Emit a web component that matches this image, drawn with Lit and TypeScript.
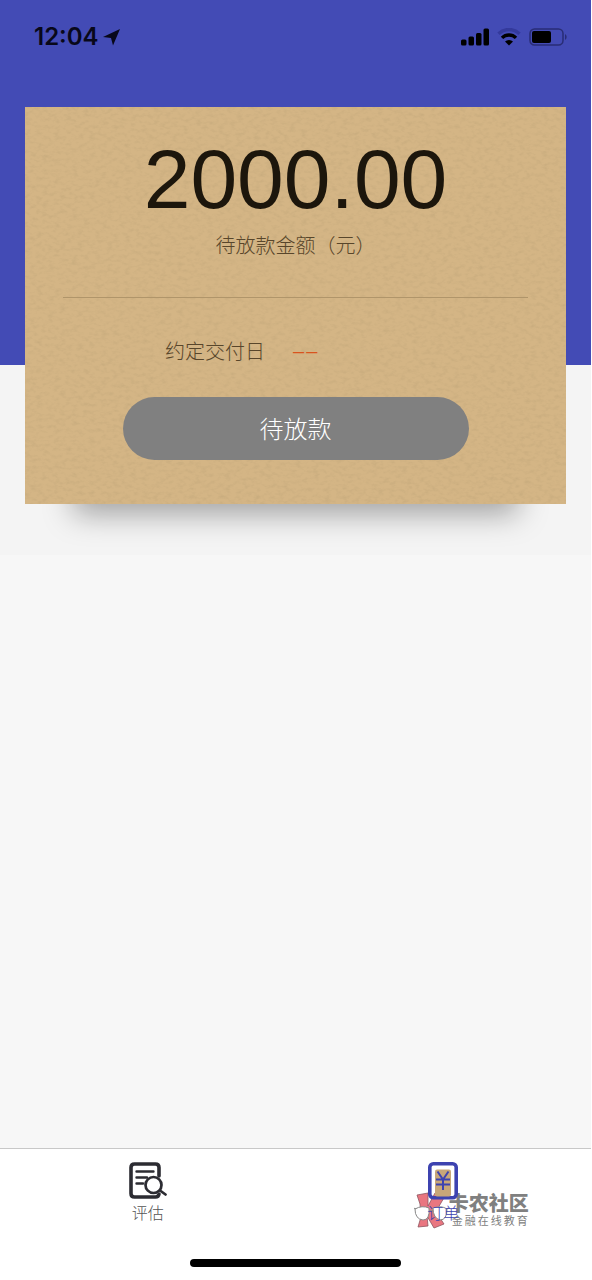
import { LitElement, html, css } from "lit";
import { customElement, property } from "lit/decorators.js";

@customElement("status-bar")
class StatusBar extends LitElement {
  static styles = css`
    :host {
      display: flex;
      justify-content: space-between;
      align-items: center;
      height: 74px;
      padding: 0 23px 0 34px;
      color: #08081a;
    }
    .side {
      display: flex;
      align-items: center;
    }
    .time {
      font: 600 24px/32px Inter, "Liberation Sans", sans-serif;
    }
    .arrow {
      margin-left: 4px;
    }
    .wifi {
      margin: 0 8px;
    }
    svg {
      display: block;
    }
  `;
  render() {
    return html`
      <div class="side">
        <span class="time">12:04</span>
        <svg class="arrow" width="18" height="18" viewBox="0 0 18 18">
          <path d="M17 1 0 9 8 10 10 17.500Z" fill="currentColor" />
        </svg>
      </div>
      <div class="side">
        <svg width="28" height="18" viewBox="0 0 28 18" fill="#000">
          <rect x="0" y="11.500" width="5.500" height="6" rx="1.500" />
          <rect x="7.500" y="8.500" width="5.500" height="9" rx="1.500" />
          <rect x="15" y="5" width="5.500" height="12.500" rx="1.500" />
          <rect x="22.500" y="0.500" width="5.500" height="17" rx="1.500" />
        </svg>
        <svg class="wifi" width="24" height="18" viewBox="0 0 24 18" fill="none">
          <path d="M1.500 5.800a15 15 0 0 1 21 0" stroke="#343a9c" stroke-width="3.400" />
          <path d="M5 9.900a10 10 0 0 1 14 0" stroke="#000" stroke-width="3.400" />
          <path d="M8 13.600a5.800 5.800 0 0 1 8 0L12 17.500Z" fill="#000" />
        </svg>
        <svg width="39" height="18" viewBox="0 0 39 18">
          <rect x="1" y="1" width="33" height="16" rx="4.500" fill="none" stroke="#292d75" stroke-width="1.500" />
          <rect x="3" y="3" width="19" height="12" rx="2" fill="#000" />
          <path d="M36 6v6a3.500 3.500 0 0 0 0-6Z" fill="#292d75" />
        </svg>
      </div>
    `;
  }
}

@customElement("loan-card")
class LoanCard extends LitElement {
  @property() amount = "";
  @property() date = "––";

  static styles = css`
    :host {
      display: block;
      position: relative;
    }
    .shadow {
      position: absolute;
      left: 48px;
      right: 48px;
      bottom: 0;
      height: 80px;
      box-shadow: 0 10px 30px rgba(0, 0, 0, 0.34);
    }
    .card {
      position: relative;
      display: flex;
      flex-direction: column;
      align-items: center;
      padding: 32px 38px 44px;
      background: #d4b585;
      overflow: hidden;
    }
    .paper {
      position: absolute;
      inset: 0;
      width: 100%;
      height: 100%;
    }
    .amount,
    .label,
    .term,
    .action {
      position: relative;
    }
    .amount {
      font: 400 84px/80px "Liberation Sans", sans-serif;
      color: #1c160c;
    }
    .label {
      margin-top: 10px;
      font-size: 20px;
      line-height: 32px;
      color: #58462b;
    }
    .term {
      box-sizing: border-box;
      width: 100%;
      display: flex;
      gap: 28px;
      margin-top: 36px;
      padding: 37px 0 0 102px;
      border-top: 1px solid #b0956a;
      font-size: 20px;
      line-height: 32px;
      color: #58462b;
    }
    .date {
      display: flex;
      gap: 2px;
      font-family: "Liberation Sans", sans-serif;
      color: #d9541e;
    }
    .action {
      width: 346px;
      max-width: 100%;
      height: 63px;
      margin-top: 30px;
      padding: 0 0 2px;
      border: 0;
      border-radius: 32px;
      background: #808080;
      color: #fff;
      font: 300 24px/32px "Noto Sans CJK SC", sans-serif;
    }
  `;
  render() {
    return html`
      <div class="shadow"></div>
      <section class="card">
        <svg class="paper" aria-hidden="true">
          <filter id="grain" x="0" y="0" width="100%" height="100%">
            <feTurbulence type="fractalNoise" baseFrequency="0.17 0.27" numOctaves="3" seed="7" />
            <feColorMatrix values="0 0 0 0 0.5  0 0 0 0 0.36  0 0 0 0 0.18  0.900 0 0 0 -0.390" />
          </filter>
          <rect width="100%" height="100%" filter="url(#grain)" />
        </svg>
        <div class="amount">${this.amount}</div>
        <div class="label">待放款金额（元）</div>
        <div class="term">
          <span>约定交付日</span>
          <span class="date">${[...this.date].map((c) => html`<span>${c}</span>`)}</span>
        </div>
        <button class="action">待放款</button>
      </section>
    `;
  }
}

@customElement("tab-bar")
class TabBar extends LitElement {
  static styles = css`
    :host {
      display: block;
      position: relative;
      background: #fff;
      border-top: 1px solid #c8c8c8;
    }
    .tabs {
      position: relative;
      z-index: 1;
      display: grid;
      grid-template-columns: 1fr 1fr;
    }
    .tab {
      display: flex;
      flex-direction: column;
      align-items: center;
      padding-top: 12px;
      font-size: 16px;
      line-height: 24px;
      color: #555;
      text-decoration: none;
    }
    .current {
      color: #3d43b0;
    }
    .home {
      width: 211px;
      height: 8px;
      margin: 35px auto 13px;
      border-radius: 4px;
      background: #000;
    }
    .mark {
      position: absolute;
      top: 43px;
      left: 70%;
      display: flex;
      align-items: flex-start;
    }
    .words {
      display: flex;
      flex-direction: column;
      margin-left: -1px;
      color: #808080;
      white-space: nowrap;
    }
    .name {
      font-size: 20px;
      line-height: 22px;
      font-weight: 900;
    }
    .motto {
      display: flex;
      gap: 2px;
      margin-left: 3px;
      font-size: 11px;
      line-height: 12px;
      font-weight: 400;
    }
    svg {
      display: block;
    }
  `;
  render() {
    return html`
      <nav class="tabs">
        <a class="tab" href="#assess">
          <svg width="38" height="39" viewBox="0 0 38 39" fill="none" stroke="#2c2c32" stroke-linecap="round">
            <path d="M30 15V6.500Q30 3 26.500 3H5.500Q2 3 2 6.500V32.500Q2 36 5.500 36H26.500Q29.500 36 30 33" stroke-width="3.600" />
            <path d="M7.500 10.500H24.500M7.500 16.500H18M7.500 22.500H14" stroke-width="2.400" />
            <circle cx="24.500" cy="24" r="8" fill="#fff" stroke-width="2.700" />
            <path d="M31 29.500 36.500 33.500" stroke-width="2.700" />
          </svg>
          <span>评估</span>
        </a>
        <a class="tab current" href="#orders">
          <svg width="30" height="39" viewBox="0 0 30 39" fill="none">
            <rect x="1.800" y="2.800" width="26.400" height="34" rx="3.500" stroke="#3d43b0" stroke-width="3.600" />
            <rect x="7" y="8.500" width="16" height="27" rx="2" fill="#c8a678" />
            <path d="M9.500 10.500 15 18.500 20.500 10.500M15 18.500V29M8 18.500H22M8 23.500H22" stroke="#3d43b0" stroke-width="2" />
          </svg>
          <span>订单</span>
        </a>
      </nav>
      <div class="mark">
        <svg width="36" height="39" viewBox="0 0 36 39">
          <path d="M3 3 14 1 14 14 21 1 31 4 24 16 22 20 30 32 20 36 13 24 14 34 4 35 7 25 6 12Z" fill="#e97680" stroke="#8d5560" stroke-width="0.800" />
          <path d="M-1 16 3 17M31 17 35 16M15 19Q17 17 19 19" fill="none" stroke="#888" />
          <path d="M1 17Q8 13 15 16 16 28 9 28 1 27 1 17ZM19 16Q27 13 33 17 33 28 26 28 19 26 19 16Z" fill="#fff" stroke="#888" />
        </svg>
        <div class="words">
          <span class="name">卡农社区</span>
          <span class="motto">${[..."金融在线教育"].map((c) => html`<span>${c}</span>`)}</span>
        </div>
      </div>
      <div class="home"></div>
    `;
  }
}

@customElement("app-root")
class AppRoot extends LitElement {
  static styles = css`
    :host {
      display: flex;
      flex-direction: column;
      min-height: 100vh;
      box-sizing: border-box;
      border-right: 1px solid #fff;
      background: #f7f7f7;
      font-family: "Noto Sans CJK SC", sans-serif;
      font-weight: 300;
    }
    .top {
      padding-bottom: 51px;
      background: linear-gradient(#434bb5 365px, #f4f4f4 365px);
    }
    .card {
      margin: 33px 25px 0;
    }
    .tabs {
      margin-top: auto;
    }
  `;
  render() {
    return html`
      <header class="top">
        <status-bar></status-bar>
        <loan-card class="card" amount="2000.00"></loan-card>
      </header>
      <tab-bar class="tabs"></tab-bar>
    `;
  }
}
